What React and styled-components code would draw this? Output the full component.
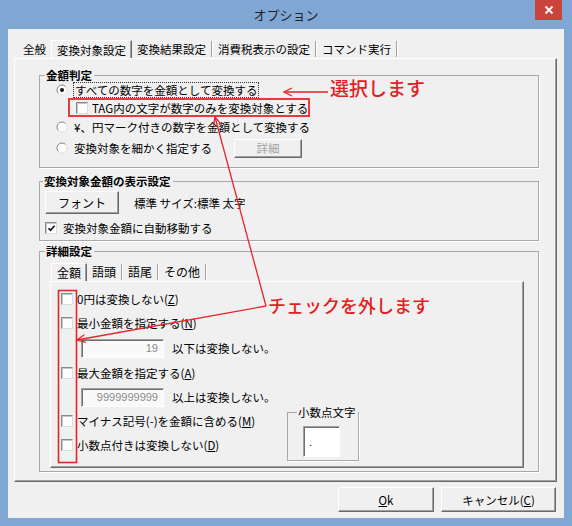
import styled, { createGlobalStyle, css } from "styled-components";

const GlobalStyle = createGlobalStyle`
  html, body {
    margin: 0;
    padding: 0;
    background: #fff;
  }
  body {
    font-family: "Noto Sans CJK JP", "Noto Sans", sans-serif;
    font-size: 11.5px;
    line-height: 14px;
    color: #000;
  }
`;

const Window = styled.div`
  position: relative;
  width: 572px;
  height: 526px;
  box-sizing: border-box;
  background: #80a7d4;
  padding: 0 8px 8px;
  display: flex;
  flex-direction: column;
`;

const TitleBar = styled.div`
  height: 29px;
  display: grid;
  grid-template-columns: 1fr auto 1fr;
  align-items: start;
`;

const Title = styled.div`
  grid-column: 2;
  line-height: 30px;
  font-size: 13px;
  color: #222;
`;

const CloseButton = styled.div`
  grid-column: 3;
  justify-self: end;
  width: 27px;
  height: 20px;
  margin-right: 2px;
  background: #c8443c;
  display: flex;
  align-items: center;
  justify-content: center;
`;

const Client = styled.div`
  flex: 1;
  background: #f0f0f0;
  display: flex;
  flex-direction: column;
  box-sizing: border-box;
  padding: 11px 7px 0 6px;
`;

const TabStrip = styled.div`
  display: flex;
  align-items: flex-end;
  height: 18px;
  padding-left: ${(p) => p.$indent}px;
  font-size: ${(p) => p.$size}px;
`;

const Tab = styled.div`
  display: flex;
  align-items: center;
  height: 18px;
  box-sizing: border-box;
  padding: 0 5px;
  white-space: nowrap;
  ${(p) =>
    p.$active &&
    css`
      padding: 0 5px 0 5px;
      border-top: 1px solid #fff;
      border-left: 1px solid #fff;
      border-right: 1px solid #6a6a6a;
      box-shadow: inset -1px 0 #a0a0a0;
    `}
`;

const TabSep = styled.div`
  width: 2px;
  height: 16px;
  box-sizing: border-box;
  align-self: center;
  border-left: 1px solid #a0a0a0;
  border-right: 1px solid #fff;
`;

const Page = styled.div`
  height: ${(p) => p.$h}px;
  box-sizing: border-box;
  border: 1px solid;
  border-color: #fff #6a6a6a #6a6a6a #fff;
  box-shadow: inset -1px -1px #a0a0a0;
  display: flex;
  flex-direction: column;
  position: relative;
  padding: ${(p) => p.$pad};
`;

const Group = styled.fieldset`
  margin: ${(p) => p.$mt || 0}px 0 0;
  padding: 0;
  min-width: 0;
  border: 1px solid #a8a8a8;
  box-shadow: 1px 1px 0 #fff;
  width: ${(p) => (p.$w ? `${p.$w}px` : "auto")};
  box-sizing: border-box;
`;

const Legend = styled.legend`
  margin-left: ${(p) => p.$ml}px;
  padding: 0 2px 0 1px;
  line-height: 14px;
  font-weight: ${(p) => (p.$plain ? 400 : 700)};
  background: #f0f0f0;
`;

const GroupBody = styled.div`
  display: flex;
  flex-direction: column;
  align-items: flex-start;
  padding: ${(p) => p.$pad};
`;

const Row = styled.div`
  display: flex;
  align-items: center;
  height: ${(p) => p.$h}px;
  margin-top: ${(p) => p.$mt || 0}px;
  gap: ${(p) => (p.$gap != null ? p.$gap : 5)}px;
  padding-left: ${(p) => p.$pl || 0}px;
  white-space: nowrap;
`;

const FocusLabel = styled.span`
  outline: 1px dotted #333;
  outline-offset: 0;
  padding: 0 1px;
`;

const RedFrame = styled.div`
  margin-left: 12px;
  width: 242px;
  height: 19px;
  box-sizing: border-box;
  border: 2px solid #e83a3c;
  display: flex;
  align-items: center;
  padding-left: 6px;
`;

const Box = styled.div`
  width: 12px;
  height: 12px;
  flex: none;
  box-sizing: border-box;
  border: 1px solid;
  border-color: #8a8a8a #dcdcdc #dcdcdc #8a8a8a;
  box-shadow: inset 1px 1px #c6c6c6;
  background: #fff;
  display: flex;
  align-items: center;
  justify-content: center;
`;

const Button = styled.div`
  width: ${(p) => p.$w}px;
  height: ${(p) => p.$h}px;
  box-sizing: border-box;
  flex: none;
  margin-left: ${(p) => p.$ml || 0}px;
  border: 1px solid;
  border-color: #fff #6a6a6a #6a6a6a #fff;
  box-shadow: inset -1px -1px #a0a0a0;
  background: #f0f0f0;
  display: flex;
  align-items: center;
  justify-content: center;
  color: ${(p) => (p.$disabled ? "#a3a3a3" : "#000")};
  font-size: ${(p) => p.$size || 11.5}px;
`;

const TextBox = styled.div`
  width: ${(p) => p.$w}px;
  height: ${(p) => p.$h}px;
  box-sizing: border-box;
  flex: none;
  border: 1px solid;
  border-color: #a0a0a0 #fff #fff #a0a0a0;
  box-shadow: inset 1px 1px #6e6e6e;
  background: ${(p) => (p.$white ? "#fff" : "#f9f9f9")};
  display: flex;
  align-items: ${(p) => (p.$bottom ? "flex-end" : "center")};
  justify-content: ${(p) => (p.$left ? "flex-start" : "flex-end")};
  padding: ${(p) => (p.$bottom ? "0 0 7px 5px" : "0 5px 0 0")};
  color: ${(p) => (p.$white ? "#000" : "#8a8a8a")};
  font-family: "Liberation Sans", sans-serif;
  font-size: 11px;
`;

const Note = styled.span`
  margin-left: 8px;
`;

const Split = styled.div`
  display: flex;
  align-items: flex-start;
`;

const LeftCol = styled.div`
  width: 226px;
  display: flex;
  flex-direction: column;
`;

const Footer = styled.div`
  display: flex;
  justify-content: flex-end;
  gap: 7px;
  padding: 5px 1px 0 0;
`;

const Annotation = styled.div`
  position: absolute;
  left: ${(p) => p.$x}px;
  top: ${(p) => p.$y}px;
  font-size: ${(p) => p.$size}px;
  line-height: 20px;
  color: #e31d24;
  font-weight: 500;
  white-space: nowrap;
`;

const Overlay = styled.svg`
  position: absolute;
  left: 0;
  top: 0;
  pointer-events: none;
`;

const Radio = ({ checked }) => (
  <svg width="12" height="12" viewBox="0 0 12 12" style={{ flex: "none" }}>
    <circle cx="6" cy="6" r="5" fill="#fff" />
    <path d="M2.46 9.54 A5 5 0 0 1 9.54 2.46" fill="none" stroke="#808080" strokeWidth="1" />
    <path d="M9.54 2.46 A5 5 0 0 1 2.46 9.54" fill="none" stroke="#e2e2e2" strokeWidth="1" />
    {checked && <circle cx="6" cy="6" r="2" fill="#111" />}
  </svg>
);

const Check = ({ checked }) => (
  <Box>
    {checked && (
      <svg width="9" height="9" viewBox="0 0 9 9">
        <path d="M1.5 4.2 L3.5 6.4 L7.6 1.8" fill="none" stroke="#111" strokeWidth="1.6" />
      </svg>
    )}
  </Box>
);

export default function App() {
  return (
    <>
      <GlobalStyle />
      <Window>
        <TitleBar>
          <Title>オプション</Title>
          <CloseButton>
            <svg width="10" height="10" viewBox="0 0 10 10">
              <path d="M1.5 1.5 L8.5 8.5 M8.5 1.5 L1.5 8.5" stroke="#fff" strokeWidth="1.8" />
            </svg>
          </CloseButton>
        </TitleBar>

        <Client>
          <TabStrip $indent={4} $size={11.5}>
            <Tab>全般</Tab>
            <Tab $active>変換対象設定</Tab>
            <Tab>変換結果設定</Tab>
            <TabSep />
            <Tab>消費税表示の設定</Tab>
            <TabSep />
            <Tab>コマンド実行</Tab>
            <TabSep />
          </TabStrip>

          <Page $h={424} $pad="9px 17px 0 24px">
            <Group>
              <Legend $ml={5}>金額判定</Legend>
              <GroupBody $pad="0 0 8px 16px">
                <Row $h={16} $gap={6}>
                  <Radio checked />
                  <FocusLabel>すべての数字を金額として変換する</FocusLabel>
                </Row>
                <RedFrame>
                  <Row $h={15} $gap={4}>
                    <Check />
                    <span>TAG内の文字が数字のみを変換対象とする</span>
                  </Row>
                </RedFrame>
                <Row $h={20} $gap={6}>
                  <Radio />
                  <span>&yen;、円マーク付きの数字を金額として変換する</span>
                </Row>
                <Row $h={22} $gap={6}>
                  <Radio />
                  <span>変換対象を細かく指定する</span>
                  <Button $w={68} $h={19} $ml={16} $disabled>
                    詳細
                  </Button>
                </Row>
              </GroupBody>
            </Group>

            <Group $mt={6}>
              <Legend $ml={3}>変換対象金額の表示設定</Legend>
              <GroupBody $pad="3px 0 3px 5px">
                <Row $h={23} $gap={15}>
                  <Button $w={74} $h={23} $size={12}>
                    フォント
                  </Button>
                  <span>標準 サイズ:標準 太字</span>
                </Row>
                <Row $h={18} $mt={5} $gap={6}>
                  <Check checked />
                  <span>変換対象金額に自動移動する</span>
                </Row>
              </GroupBody>
            </Group>

            <Group $mt={3}>
              <Legend $ml={5}>詳細設定</Legend>
              <GroupBody $pad="5px 14px 3px 10px" style={{ alignItems: "stretch" }}>
                <TabStrip $indent={1} $size={12}>
                  <Tab $active>金額</Tab>
                  <Tab>語頭</Tab>
                  <TabSep />
                  <Tab>語尾</Tab>
                  <TabSep />
                  <Tab>その他</Tab>
                  <TabSep />
                </TabStrip>
                <Page $h={187} $pad="5px 0 0 10px">
                  <Row $h={24} $gap={4}>
                    <Check />
                    <span>
                      0円は変換しない(<u>Z</u>)
                    </span>
                  </Row>
                  <Row $h={24} $gap={4}>
                    <Check />
                    <span>
                      最小金額を指定する(<u>N</u>)
                    </span>
                  </Row>
                  <Row $h={26} $pl={20} $gap={0}>
                    <TextBox $w={83} $h={19}>19</TextBox>
                    <Note>以下は変換しない。</Note>
                  </Row>
                  <Row $h={24} $gap={4}>
                    <Check />
                    <span>
                      最大金額を指定する(<u>A</u>)
                    </span>
                  </Row>
                  <Split>
                    <LeftCol>
                      <Row $h={24} $pl={20} $gap={0}>
                        <TextBox $w={83} $h={19}>9999999999</TextBox>
                        <Note>以上は変換しない。</Note>
                      </Row>
                      <Row $h={24} $gap={4}>
                        <Check />
                        <span>
                          マイナス記号(-)を金額に含める(<u>M</u>)
                        </span>
                      </Row>
                      <Row $h={24} $gap={4}>
                        <Check />
                        <span>
                          小数点付きは変換しない(<u>D</u>)
                        </span>
                      </Row>
                    </LeftCol>
                    <Group $mt={20} $w={72}>
                      <Legend $ml={9} $plain>
                        小数点文字
                      </Legend>
                      <GroupBody $pad="7px 0 3px 15px">
                        <TextBox $w={37} $h={31} $white $left $bottom>
                          .
                        </TextBox>
                      </GroupBody>
                    </Group>
                  </Split>
                </Page>
              </GroupBody>
            </Group>
          </Page>

          <Footer>
            <Button $w={96} $h={25}>
              <span>
                <u>O</u>k
              </span>
            </Button>
            <Button $w={115} $h={25}>
              <span>
                キャンセル(<u>C</u>)
              </span>
            </Button>
          </Footer>
        </Client>

        <Annotation $x={330} $y={78} $size={19}>
          選択します
        </Annotation>
        <Annotation $x={268} $y={295} $size={18}>
          チェックを外します
        </Annotation>

        <Overlay width="572" height="526" viewBox="0 0 572 526">
          <g stroke="#e3262b" strokeWidth="1.3" fill="none">
            <line x1="284" y1="92" x2="328" y2="92" />
            <polyline points="292,88 284,92 292,96" />
            <line x1="215" y1="117" x2="266" y2="306" />
            <polyline points="213.5,125.9 215,117 220.8,123.9" />
            <line x1="266" y1="306" x2="77" y2="340" />
            <polyline points="85.7,342.3 77,340 84.3,334.8" />
            <rect x="58.5" y="290.5" width="18" height="172" strokeWidth="1.6" />
          </g>
        </Overlay>
      </Window>
    </>
  );
}
